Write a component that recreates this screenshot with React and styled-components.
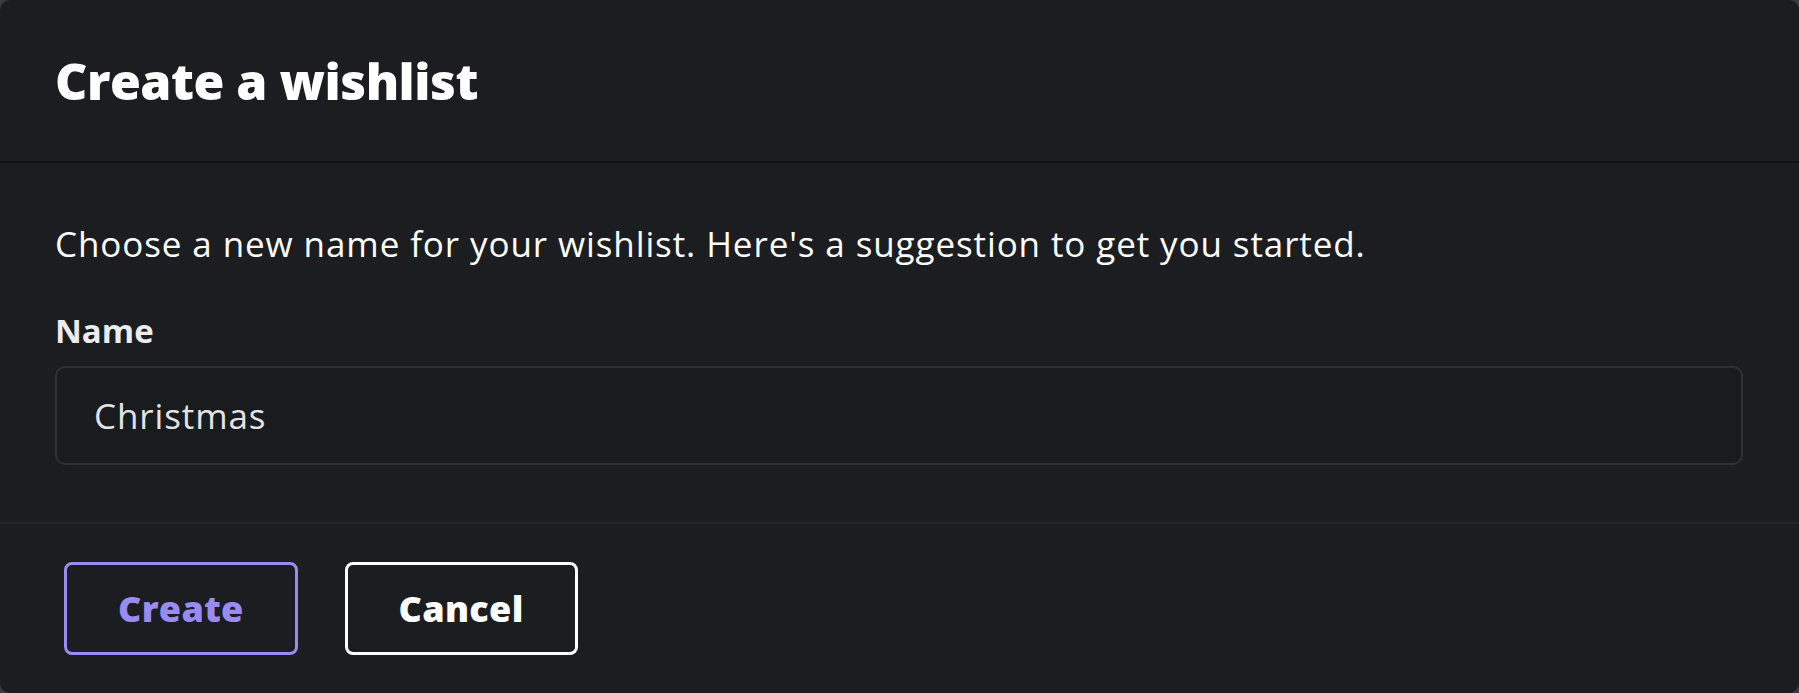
import React from "react";
import styled, { createGlobalStyle } from "styled-components";

const GlobalStyle = createGlobalStyle`
  html, body {
    margin: 0;
    padding: 0;
    background: #3a3b3f;
  }
  body {
    font-family: "Open Sans", Lato, sans-serif;
  }
`;

export default function App() {
  return (
    <>
      <GlobalStyle />
      <Dialog>
        <Header>
          <Title>Create a wishlist</Title>
        </Header>

        <Body>
          <Description>
            Choose a new name for your wishlist. Here's a suggestion to get you
            started.
          </Description>
          <Label htmlFor="wishlist-name">Name</Label>
          <Input id="wishlist-name" defaultValue="Christmas" />
        </Body>

        <Footer>
          <Button $primary>Create</Button>
          <Button>Cancel</Button>
        </Footer>
      </Dialog>
    </>
  );
}

const Dialog = styled.div`
  width: 1799px;
  height: 693px;
  display: flex;
  flex-direction: column;
  background-color: #1c1d20;
  border-radius: 10px;
  overflow: hidden;
  color: #ffffff;
`;

const Header = styled.header`
  height: 161px;
  display: flex;
  align-items: center;
  padding: 0 55px;
  border-bottom: 2px solid #111214;
`;

const Title = styled.h1`
  margin: 0;
  font-size: 50px;
  font-weight: 800;
  letter-spacing: -0.5px;
`;

const Body = styled.main`
  height: 361px;
  display: flex;
  flex-direction: column;
  padding: 58px 56px 0 55px;
  box-sizing: border-box;
  border-bottom: 2px solid #25262a;
`;

const Description = styled.p`
  margin: 0;
  font-size: 35px;
  line-height: 46px;
  font-weight: 400;
  letter-spacing: 0.9px;
`;

const Label = styled.label`
  margin-top: 44px;
  font-size: 33px;
  line-height: 40px;
  font-weight: 700;
  color: #ececec;
`;

const Input = styled.input`
  margin-top: 15px;
  height: 99px;
  box-sizing: border-box;
  padding: 0 37px;
  background: #1a1b1e;
  border: 2px solid #2f3034;
  border-radius: 10px;
  color: #e4e4e4;
  font-family: inherit;
  font-size: 35px;
  letter-spacing: 0.9px;
  outline: none;
`;

const Footer = styled.footer`
  flex: 1;
  display: flex;
  align-items: center;
  gap: 47px;
  padding: 0 64px;
`;

const Button = styled.button`
  height: 93px;
  padding: 0 51px;
  box-sizing: border-box;
  background: transparent;
  border: 3px solid ${(props) => (props.$primary ? "#9a8bf0" : "#ffffff")};
  border-radius: 8px;
  color: ${(props) => (props.$primary ? "#9a8bf0" : "#ffffff")};
  font-family: inherit;
  font-size: 36px;
  font-weight: 800;
  letter-spacing: 0.3px;
  cursor: pointer;
`;
